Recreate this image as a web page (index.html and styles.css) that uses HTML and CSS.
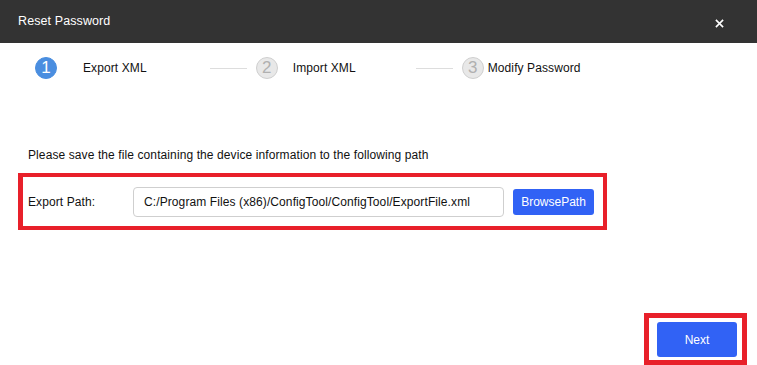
FILE: index.html
```html
<!DOCTYPE html>
<html>
<head>
<meta charset="utf-8">
<link rel="stylesheet" href="styles.css">
</head>
<body>
<div class="dialog">
  <div class="header">
    <span class="title">Reset Password</span>
    <svg class="close" width="10" height="10" viewBox="0 0 10 10"><path d="M1 1L9 9M9 1L1 9" stroke="#fff" stroke-width="1.8"/></svg>
  </div>
  <div class="body">
    <div class="steps">
      <span class="circle active">1</span>
      <span class="label l1">Export XML</span>
      <span class="line line1"></span>
      <span class="circle">2</span>
      <span class="label l2">Import XML</span>
      <span class="line line2"></span>
      <span class="circle">3</span>
      <span class="label l3">Modify Password</span>
    </div>
    <p class="info">Please save the file containing the device information to the following path</p>
    <div class="pathbox">
      <span class="plabel">Export Path:</span>
      <div class="input">C:/Program Files (x86)/ConfigTool/ConfigTool/ExportFile.xml</div>
      <button class="btn browse">BrowsePath</button>
    </div>
    <div class="footer">
      <div class="nextbox"><button class="btn next">Next</button></div>
    </div>
  </div>
</div>
</body>
</html>
```

FILE: styles.css
```css
* { box-sizing: border-box; }
html, body { margin: 0; padding: 0; }
body {
  width: 757px;
  height: 365px;
  overflow: hidden;
  background: #fff;
  font-family: "Liberation Sans", Arial, sans-serif;
  font-size: 12px;
  letter-spacing: 0.1px;
  color: #111;
}
.dialog { display: flex; flex-direction: column; height: 365px; }
.header {
  height: 43px;
  background: #333333;
  display: flex;
  align-items: center;
  padding: 0 0 0 18px;
  flex: none;
}
.title { color: #fff; font-size: 12.5px; margin-top: -1px; }
.close { margin-left: auto; margin-right: 33px; width: 9px; height: 9px; margin-top: 4px; }
.body { flex: 1; display: flex; flex-direction: column; padding: 0 0 0 18px; }
.steps {
  display: flex;
  align-items: center;
  height: 22px;
  margin-top: 14px;
  padding-left: 17px;
}
.circle {
  width: 22px; height: 22px;
  border-radius: 50%;
  background: #e8e8e8;
  border: 1px solid #cfcfcf;
  color: #b0b0b0;
  font-size: 17px;
  line-height: 20px;
  text-align: center;
  flex: none;
  letter-spacing: 0;
}
.circle.active { background: #4a8ee0; border-color: #4a8ee0; color: #fff; }
.label { font-size: 12px; color: #111; }
.l1 { margin-left: 26px; }
.l2 { margin-left: 15px; }
.l3 { margin-left: 4px; }
.line { height: 1px; background: #dddddd; width: 37px; }
.line1 { margin-left: 63px; margin-right: 9px; }
.line2 { margin-left: 60px; margin-right: 9px; }
.info { margin: 69px 0 0 10px; line-height: 14px; }
.pathbox {
  margin-top: 11px;
  width: 589px;
  height: 57px;
  border: 4px solid #e8202a;
  border-left-width: 5px;
  display: flex;
  align-items: center;
  padding-left: 5px;
}
.plabel { width: 105px; }
.input {
  width: 371px;
  height: 30px;
  border: 1px solid #cfcfcf;
  border-radius: 4px;
  padding-left: 10px;
  line-height: 28px;
  color: #111;
}
.btn {
  font-family: "Liberation Sans", Arial, sans-serif;
  font-size: 12px;
  background: #3162f5;
  color: #fff;
  border: none;
  border-radius: 3px;
  padding: 0;
}
.browse { margin-left: 9px; width: 81px; height: 26px; }
.footer { margin-top: auto; display: flex; justify-content: flex-end; padding-right: 10px; }
.nextbox {
  width: 103px;
  height: 52px;
  border: 5px solid #e8202a;
  padding: 4px 5px 0 8px;
}
.next { width: 80px; height: 35px; display: block; }
```
